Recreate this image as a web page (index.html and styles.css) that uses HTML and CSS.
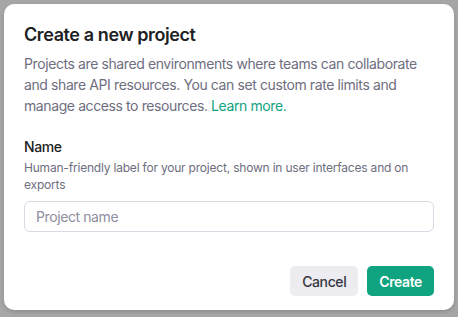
FILE: index.html
```html
<!DOCTYPE html>
<html lang="en">
<head>
  <meta charset="UTF-8">
  <title>Create a new project</title>
  <link rel="stylesheet" href="styles.css">
</head>
<body>
  <div class="modal">
    <h2 class="title">Create a new project</h2>
    <p class="intro">Projects are shared environments where teams can collaborate and share API resources. You can set custom rate limits and manage access to resources. <a href="#">Learn more.</a></p>
    <div class="field">
      <label class="label" for="name">Name</label>
      <div class="hint">Human-friendly label for your project, shown in user interfaces and on exports</div>
      <input id="name" class="input" type="text" placeholder="Project name">
    </div>
    <div class="actions">
      <button class="btn btn-cancel">Cancel</button>
      <button class="btn btn-create">Create</button>
    </div>
  </div>
</body>
</html>
```

FILE: styles.css
```css
body {
  margin: 0;
  padding: 4px;
  background: #a6a6a6;
  font-family: Inter, "Noto Sans", sans-serif;
  color: #202123;
  letter-spacing: -0.4px;
}
.modal {
  background: #fff;
  border-radius: 10px;
  padding: 19px 20px 14px 20px;
  box-shadow: 0 2px 4px rgba(0, 0, 0, 0.15);
}
.title {
  margin: 0;
  font-size: 18px;
  font-weight: 600;
  line-height: 24px;
}
.intro {
  margin: 6px 0 0 0;
  font-size: 14px;
  line-height: 21px;
  color: #6e6e80;
}
.intro a {
  color: #10a37f;
  text-decoration: none;
}
.field {
  margin-top: 21px;
}
.label {
  display: block;
  font-size: 14px;
  font-weight: 500;
  line-height: 20px;
}
.hint {
  margin-top: 2px;
  font-size: 12px;
  line-height: 17px;
  color: #6e6e80;
  letter-spacing: -0.2px;
}
.input {
  display: block;
  box-sizing: border-box;
  width: 100%;
  height: 31px;
  margin-top: 8px;
  padding: 0 11px;
  border: 1px solid #d9d9e3;
  border-radius: 6px;
  font-family: inherit;
  font-size: 14px;
  letter-spacing: inherit;
  color: #202123;
}
.input::placeholder {
  color: #8e8ea0;
}
.actions {
  display: flex;
  justify-content: flex-end;
  gap: 9px;
  margin-top: 34px;
}
.btn {
  height: 30px;
  padding: 0 12px;
  border: none;
  border-radius: 5px;
  font-family: inherit;
  font-size: 14px;
  letter-spacing: inherit;
  cursor: pointer;
}
.btn-cancel {
  background: #ececf1;
  color: #353740;
  font-weight: 500;
}
.btn-create {
  background: #10a37f;
  color: #fff;
  font-weight: 600;
}
```
